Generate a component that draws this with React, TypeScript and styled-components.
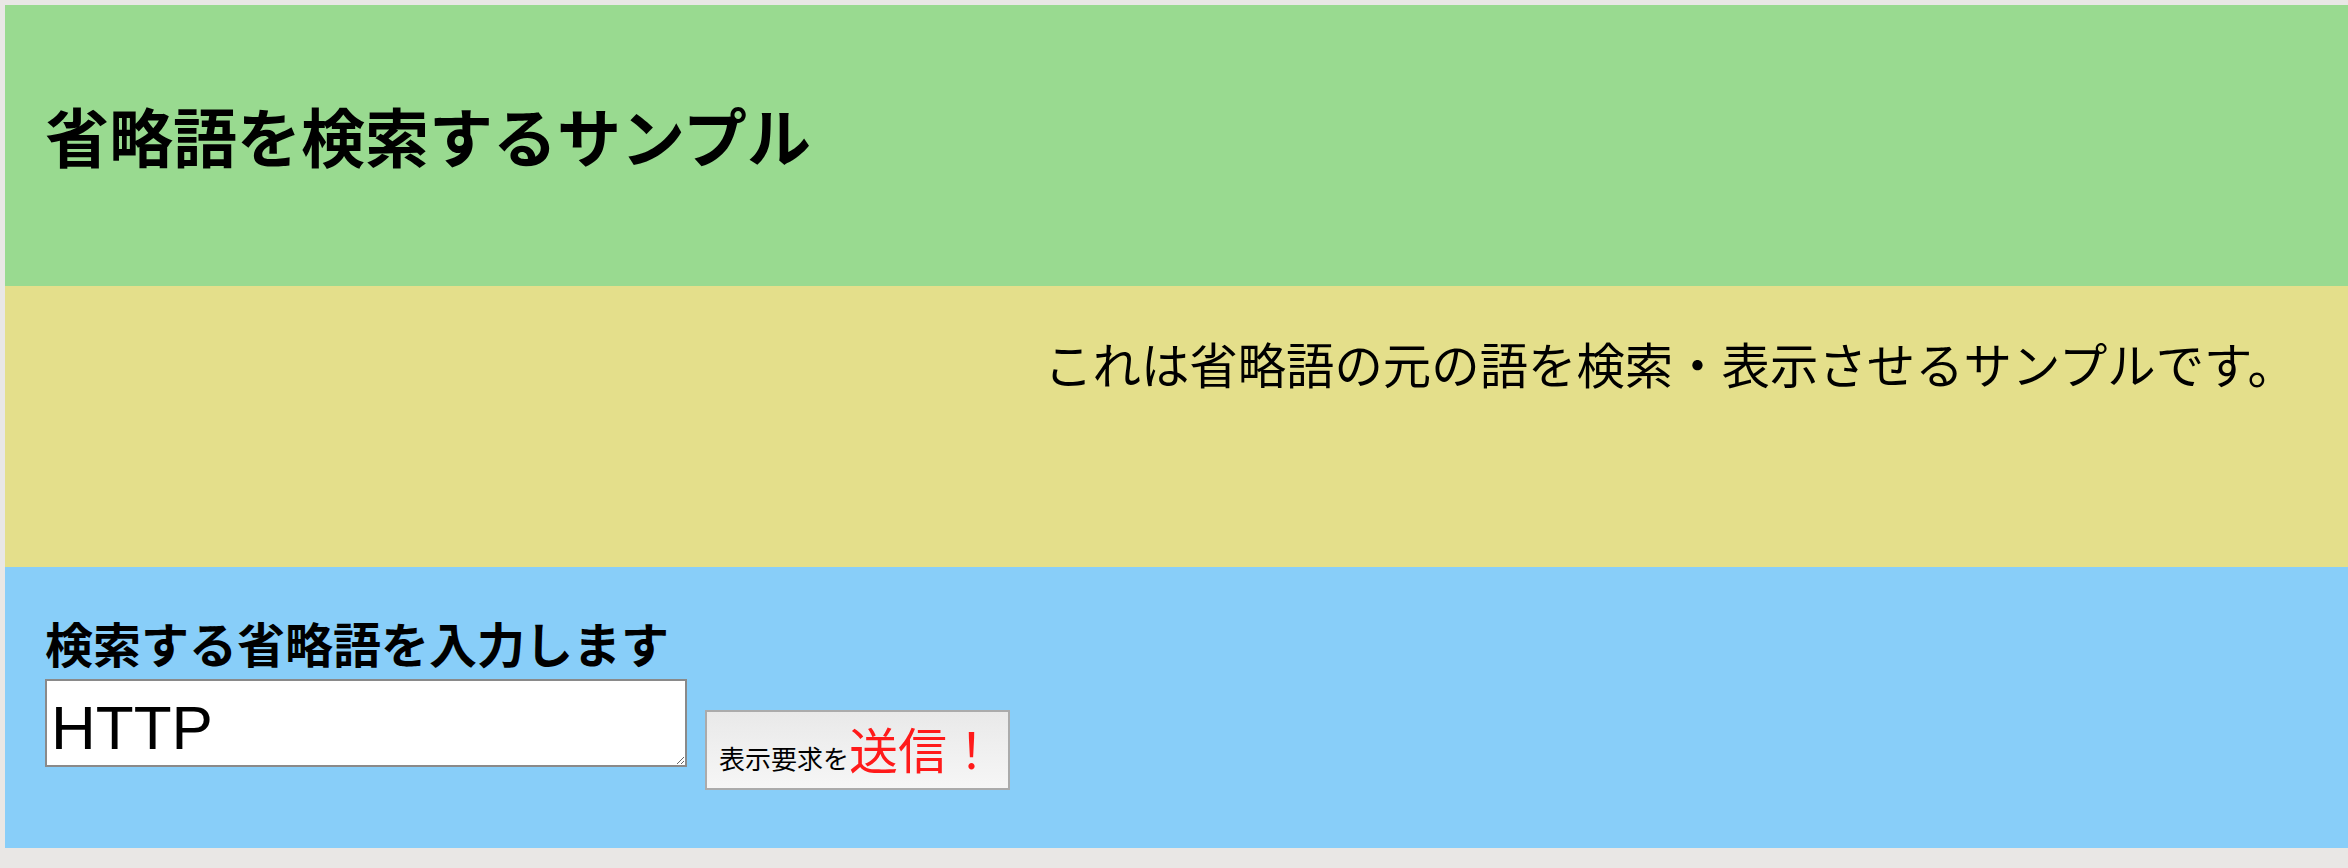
import styled, { createGlobalStyle } from "styled-components";

const GlobalStyle = createGlobalStyle`
  html, body {
    margin: 0;
    padding: 0;
    background: #e9e7e5;
  }
  body {
    padding: 5px 0 0 5px;
    font-family: "Noto Sans CJK JP", "Noto Sans", sans-serif;
    color: #000;
  }
`;

const Section = styled.section<{ $bg: string }>`
  box-sizing: border-box;
  height: 281px;
  background: ${(p) => p.$bg};
`;

const Header = styled(Section)`
  padding: 91px 40px 0;
`;

const Title = styled.h1`
  margin: 0;
  font-size: 64px;
  font-weight: 700;
  line-height: 77px;
`;

const Lead = styled(Section)`
  padding: 49px 52px 0 40px;
  text-align: right;
`;

const LeadText = styled.p`
  margin: 0;
  font-size: 48.4px;
  line-height: 56px;
  font-weight: 400;
`;

const SearchForm = styled(Section).attrs({ as: "form" })`
  padding: 46px 40px 0;
`;

const Label = styled.label`
  display: block;
  font-size: 48px;
  font-weight: 700;
  line-height: 58px;
  margin-bottom: 8px;
`;

const Row = styled.div`
  display: flex;
  align-items: flex-start;
  gap: 18px;
`;

const Field = styled.textarea`
  box-sizing: border-box;
  width: 642px;
  height: 88px;
  margin: 0;
  padding: 13px 4px 0;
  border: 2px solid #8a8a8a;
  background: #fff;
  font-family: "Liberation Sans", "Noto Sans CJK JP", sans-serif;
  font-size: 62px;
  line-height: 1.1;
  color: #000;
  overflow: hidden;
`;

const Submit = styled.button`
  box-sizing: border-box;
  width: 305px;
  height: 80px;
  margin-top: 31px;
  padding: 0 12px;
  border: 2px solid #ababab;
  background: linear-gradient(#e9e9e9, #f6f6f6);
  display: flex;
  align-items: baseline;
  justify-content: flex-start;
  font-family: "Noto Sans CJK JP", sans-serif;
  color: #000;
  cursor: pointer;
`;

const Small = styled.span`
  font-size: 26px;
`;

const Accent = styled.span`
  font-size: 49px;
  color: #ff1a1a;
`;

export default function App() {
  return (
    <>
      <GlobalStyle />
      <Header $bg="#99da90">
        <Title>省略語を検索するサンプル</Title>
      </Header>
      <Lead $bg="#e4df8b">
        <LeadText>これは省略語の元の語を検索・表示させるサンプルです。</LeadText>
      </Lead>
      <SearchForm $bg="#88cef9" onSubmit={(e: React.FormEvent) => e.preventDefault()}>
        <Label htmlFor="abbr">検索する省略語を入力します</Label>
        <Row>
          <Field id="abbr" defaultValue="HTTP" />
          <Submit type="submit">
            <Small>表示要求を</Small>
            <Accent>送信！</Accent>
          </Submit>
        </Row>
      </SearchForm>
    </>
  );
}
